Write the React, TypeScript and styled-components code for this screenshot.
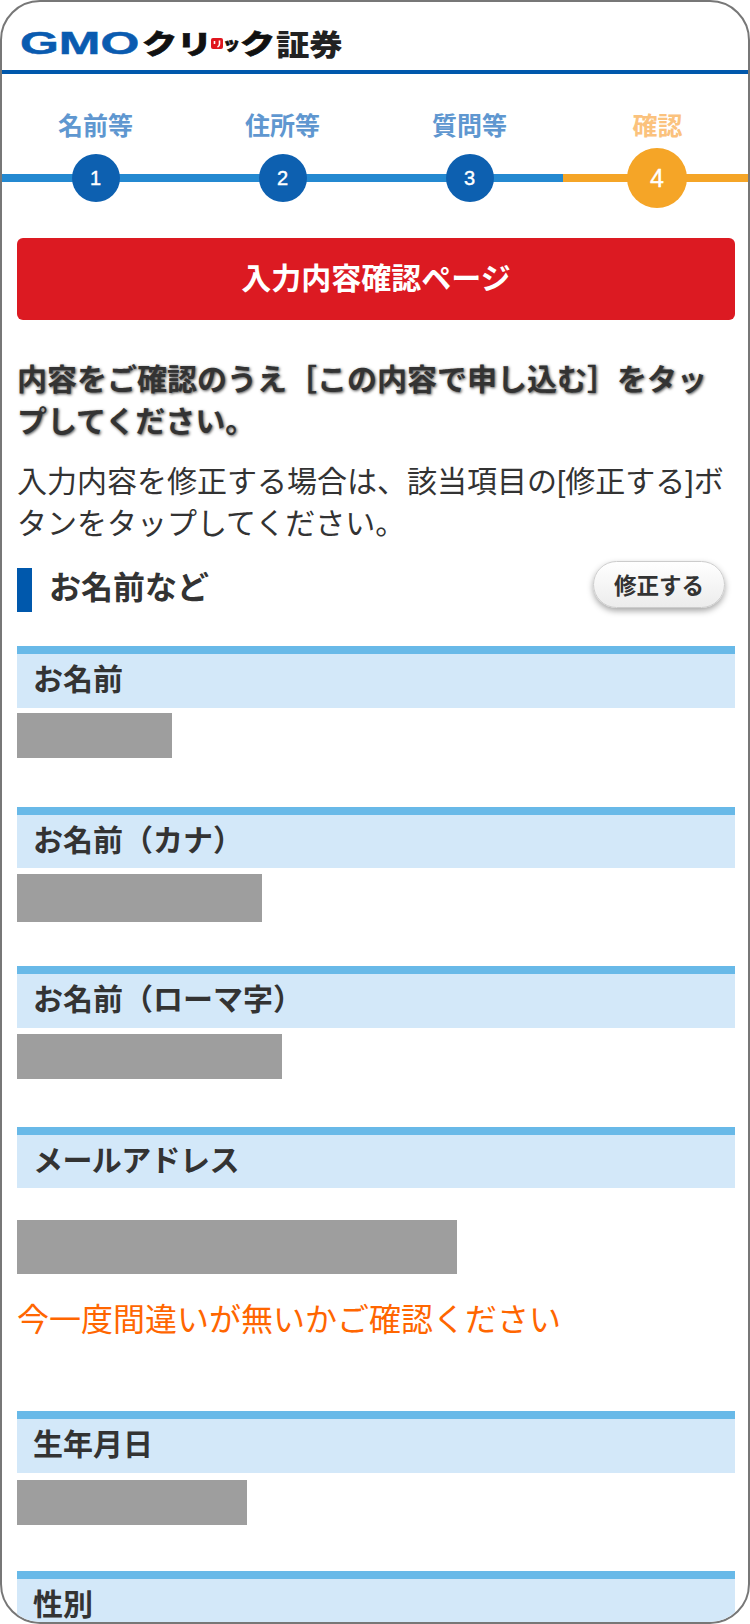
import React from 'react';
import styled, { createGlobalStyle } from 'styled-components';

const GlobalStyle = createGlobalStyle`
  html, body {
    margin: 0;
    padding: 0;
    background: #fff;
  }
  * {
    box-sizing: border-box;
  }
  body {
    font-family: "Liberation Sans", "Noto Sans CJK JP", sans-serif;
    color: #333;
  }
`;

const Frame = styled.div`
  width: 750px;
  height: 1624px;
  border: 2px solid #777;
  border-radius: 40px;
  overflow: hidden;
  background: #fff;
`;

const Header = styled.header`
  height: 72px;
  padding: 27px 0 0 18px;
  border-bottom: 4px solid #0058ac;
`;

const Logo = styled.div`
  display: flex;
  align-items: center;
  height: 28px;
  white-space: nowrap;
  font-family: "Noto Sans CJK JP", sans-serif;
`;

const LogoGmo = styled.span`
  display: inline-block;
  width: 122px;
  font-family: "Liberation Sans", sans-serif;
  font-size: 32px;
  font-weight: 700;
  line-height: 28px;
  color: #0a5bb0;
  -webkit-text-stroke: 0.5px #0a5bb0;
  transform: scaleX(1.56);
  transform-origin: left center;
`;

const LogoKana = styled.span<{ $w: number; $size: number; $scale: number }>`
  display: inline-block;
  width: ${p => p.$w}px;
  font-size: ${p => p.$size}px;
  font-weight: 900;
  line-height: 28px;
  color: #111;
  -webkit-text-stroke: 0.7px #111;
  transform: scaleX(${p => p.$scale});
  transform-origin: left center;
`;

const LogoMark = styled.svg`
  width: 12px;
  height: 11px;
`;

const LogoKanji = styled.span`
  display: inline-block;
  margin-left: 1px;
  font-size: 29px;
  font-weight: 900;
  line-height: 28px;
  color: #222;
  transform: scaleX(1.15);
  transform-origin: left center;
`;

const Steps = styled.div`
  display: flex;
  height: 136px;
  padding-top: 40px;
`;

const Step = styled.div<{ $active?: boolean }>`
  flex: ${p => (p.$active ? '1' : '0 0 187px')};
  display: flex;
  flex-direction: column;
  align-items: center;
  color: ${p => (p.$active ? '#fbc27d' : '#5f97d0')};
`;

const StepLabel = styled.div<{ $active?: boolean }>`
  height: 40px;
  margin: -8px 0 2px ${p => (p.$active ? 4 : 0)}px;
  font-size: 25px;
  font-weight: 700;
  line-height: 40px;
`;

const Track = styled.div<{ $active?: boolean }>`
  align-self: stretch;
  height: 60px;
  padding-left: ${p => (p.$active ? 3 : 0)}px;
  display: flex;
  align-items: center;
  justify-content: center;
  background: linear-gradient(
      ${p => (p.$active ? '#f5a527' : '#2489d1')},
      ${p => (p.$active ? '#f5a527' : '#2489d1')}
    )
    center / 100% 8px no-repeat;
`;

const Circle = styled.div<{ $active?: boolean }>`
  width: ${p => (p.$active ? 60 : 48)}px;
  height: ${p => (p.$active ? 60 : 48)}px;
  border-radius: 50%;
  display: flex;
  align-items: center;
  justify-content: center;
  background: ${p => (p.$active ? '#f5a527' : '#0d60b0')};
  color: #fff;
  font-family: "Liberation Sans", sans-serif;
  font-size: ${p => (p.$active ? 25 : 20)}px;
  -webkit-text-stroke: 0.4px #fff;
`;

const Content = styled.main`
  padding: 28px 13px 0 15px;
`;

const Banner = styled.div`
  height: 82px;
  padding-bottom: 6px;
  border-radius: 6px;
  background: #dc1a22;
  color: #fff;
  display: flex;
  align-items: center;
  justify-content: center;
  font-size: 30px;
  font-weight: 700;
`;

const Lead = styled.p`
  margin: 39px 0 0;
  font-size: 30px;
  font-weight: 700;
  line-height: 42px;
  white-space: nowrap;
  color: #333;
  text-shadow: 1px 1px 3px rgba(0, 0, 0, 0.7);
`;

const Note = styled.p`
  margin: 18px 0 0;
  font-size: 30px;
  line-height: 42px;
  white-space: nowrap;
  color: #333;
`;

const SectionHead = styled.div`
  display: flex;
  align-items: center;
  justify-content: space-between;
  height: 50px;
  margin-top: 20px;
`;

const SectionTitle = styled.h2`
  margin: 0;
  height: 44px;
  padding-left: 17px;
  border-left: 15px solid #0058ac;
  font-size: 32px;
  font-weight: 700;
  line-height: 40px;
  color: #333;
`;

const EditButton = styled.button`
  width: 132px;
  height: 47px;
  margin: -12px 10px 0 0;
  padding: 0;
  border: 1px solid #ccc;
  border-radius: 24px;
  background: linear-gradient(#fff, #ececec);
  box-shadow: 0 3px 6px rgba(0, 0, 0, 0.35);
  font-family: inherit;
  font-size: 22.5px;
  font-weight: 700;
  color: #333;
`;

const FieldList = styled.div`
  margin-top: 31px;
`;

const Field = styled.section<{ $gap: number }>`
  margin-bottom: ${p => p.$gap}px;
`;

const FieldLabel = styled.div<{ $h: number; $tight?: boolean }>`
  height: ${p => p.$h}px;
  padding-left: 16px;
  border-top: 8px solid #68b9e8;
  background: #d3e8f9;
  font-size: 30px;
  font-weight: 700;
  line-height: 52px;
  letter-spacing: ${p => (p.$tight ? '-0.6px' : '0')};
  color: #333;
`;

const Masked = styled.div<{ $w: number; $h: number; $top: number }>`
  width: ${p => p.$w}px;
  height: ${p => p.$h}px;
  margin-top: ${p => p.$top}px;
  background: #9e9e9e;
`;

const Warning = styled.p`
  margin: 24px 0 0;
  font-size: 32px;
  line-height: 44px;
  white-space: nowrap;
  color: #f60;
`;

const steps = [
  { label: '名前等', no: 1 },
  { label: '住所等', no: 2 },
  { label: '質問等', no: 3 },
  { label: '確認', no: 4, active: true },
];

const App = () => {
  return (
    <>
      <GlobalStyle />
      <Frame>
        <Header>
          <Logo>
            <LogoGmo>GMO</LogoGmo>
            <LogoKana $w={35} $size={27} $scale={1.3}>ク</LogoKana>
            <LogoKana $w={34} $size={27} $scale={1.3}>リ</LogoKana>
            <LogoMark viewBox="0 0 12 11">
              <rect width="12" height="11" rx="2" fill="#e0161e" />
              <path d="M3.5 3v3M8.5 2.5v3.5c0 1.5-.8 2.5-2 3" stroke="#fff" strokeWidth="1.6" fill="none" />
            </LogoMark>
            <LogoKana $w={17} $size={17} $scale={1}>ッ</LogoKana>
            <LogoKana $w={35} $size={27} $scale={1.3}>ク</LogoKana>
            <LogoKanji>証券</LogoKanji>
          </Logo>
        </Header>

        <Steps>
          {steps.map(s => (
            <Step key={s.no} $active={s.active}>
              <StepLabel $active={s.active}>{s.label}</StepLabel>
              <Track $active={s.active}>
                <Circle $active={s.active}>{s.no}</Circle>
              </Track>
            </Step>
          ))}
        </Steps>

        <Content>
          <Banner>入力内容確認ページ</Banner>

          <Lead>
            内容をご確認のうえ［この内容で申し込む］をタッ
            <br />
            プしてください。
          </Lead>
          <Note>
            入力内容を修正する場合は、該当項目の[修正する]ボ
            <br />
            タンをタップしてください。
          </Note>

          <SectionHead>
            <SectionTitle>お名前など</SectionTitle>
            <EditButton>修正する</EditButton>
          </SectionHead>

          <FieldList>
            <Field $gap={49}>
              <FieldLabel $h={62}>お名前</FieldLabel>
              <Masked $w={155} $h={45} $top={5} />
            </Field>
            <Field $gap={44}>
              <FieldLabel $h={61}>お名前（カナ）</FieldLabel>
              <Masked $w={245} $h={48} $top={6} />
            </Field>
            <Field $gap={48}>
              <FieldLabel $h={62}>お名前（ローマ字）</FieldLabel>
              <Masked $w={265} $h={45} $top={6} />
            </Field>
            <Field $gap={69}>
              <FieldLabel $h={61} $tight>メールアドレス</FieldLabel>
              <Masked $w={440} $h={54} $top={32} />
              <Warning>今一度間違いが無いかご確認ください</Warning>
            </Field>
            <Field $gap={46}>
              <FieldLabel $h={62}>生年月日</FieldLabel>
              <Masked $w={230} $h={45} $top={7} />
            </Field>
            <Field $gap={0}>
              <FieldLabel $h={60}>性別</FieldLabel>
            </Field>
          </FieldList>
        </Content>
      </Frame>
    </>
  );
};

export default App;
